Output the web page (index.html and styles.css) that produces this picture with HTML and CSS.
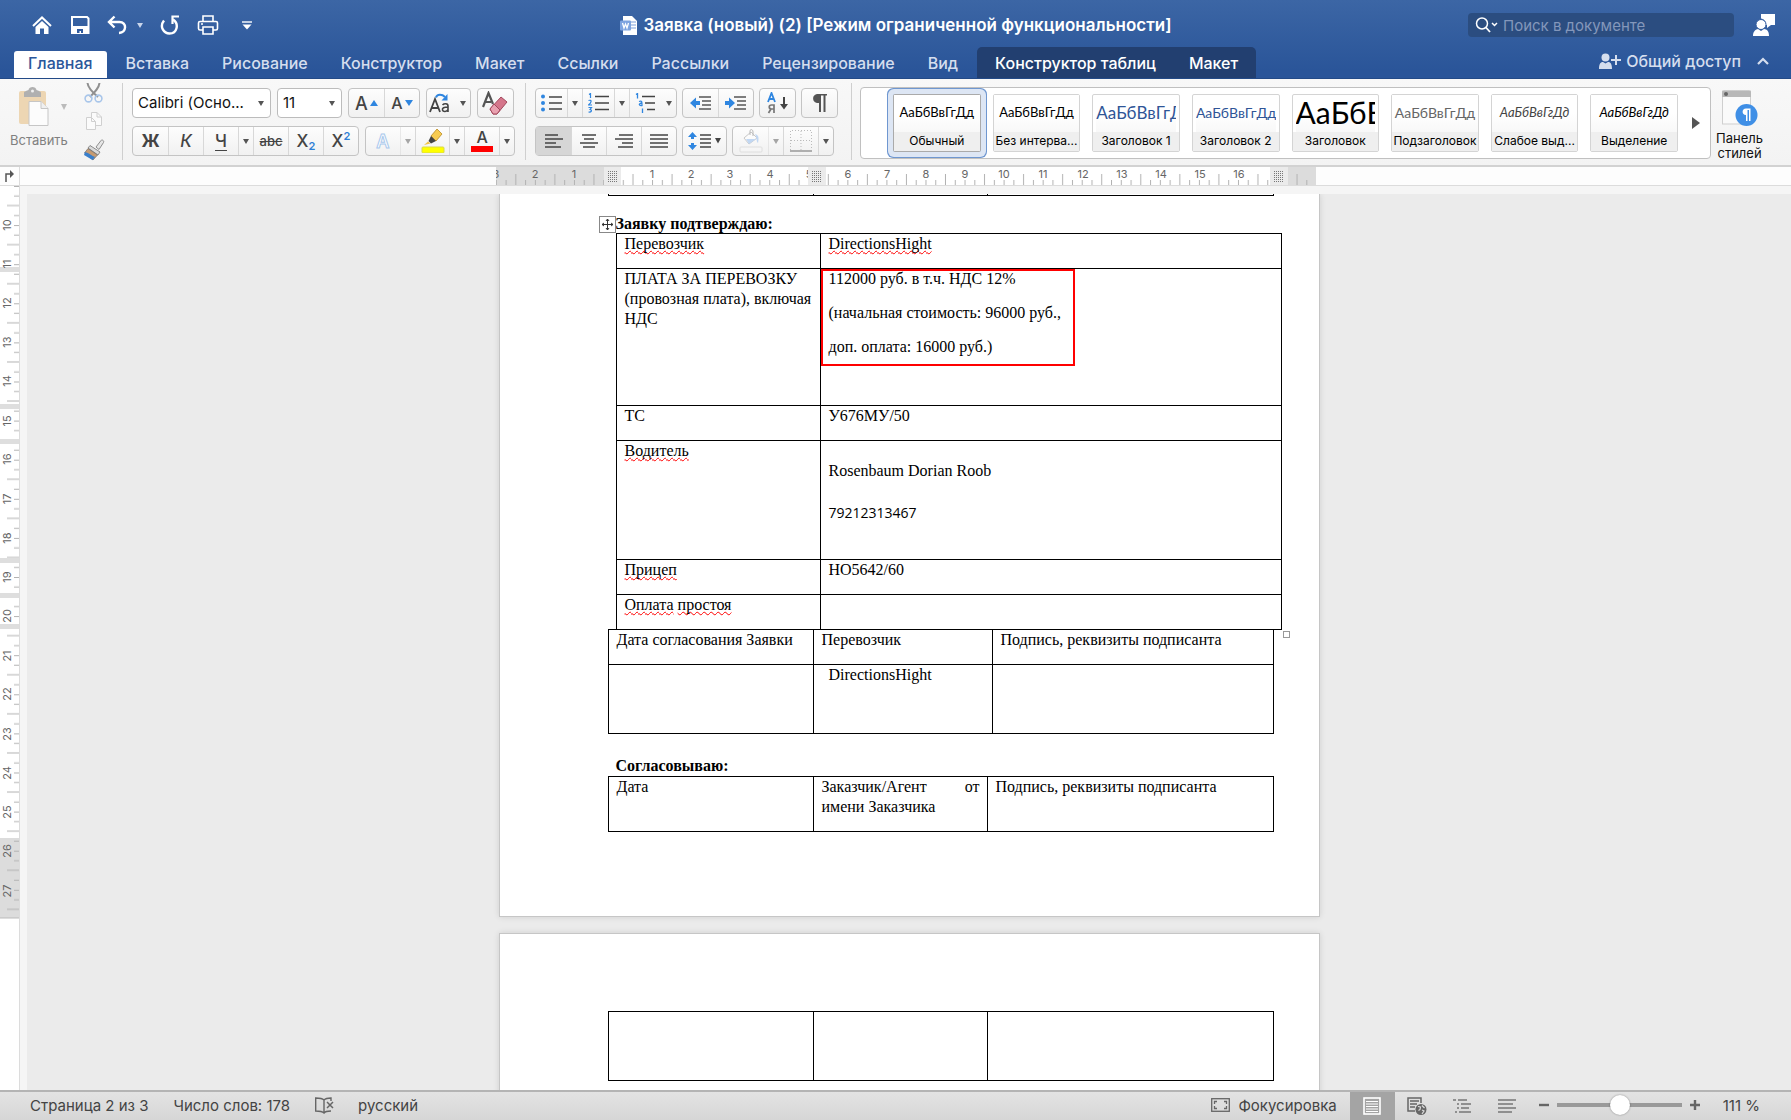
FILE: index.html
```html
<!DOCTYPE html>
<html lang="ru">
<head>
    <meta charset="UTF-8">
    <meta name="viewport" content="width=device-width, initial-scale=1.0">
    <title>Заявка (новый) (2)</title>
    <link rel="stylesheet" href="styles.css">
</head>
<body>
    <header class="top">
        <div class="titlebar">
            <div class="quick">
                <button aria-label="Домой"><svg width="22" height="20" viewBox="0 0 22 20"><path d="M2 11L11 2.500L20 11" fill="none" stroke="#fff" stroke-width="2"/><path d="M4.500 12L11 6L17.500 12V19H13V13.500H9V19H4.500Z" fill="#fff"/></svg></button>
                <button aria-label="Сохранить"><svg width="20" height="20" viewBox="0 0 20 20"><path d="M2 2H17L18.500 3.500V18H2Z" fill="none" stroke="#fff" stroke-width="2"/><path d="M2 11H18V18H2Z" fill="#fff"/><path d="M7 18V14H13V18H11V16H9.500V18Z" fill="#2f5a9e"/></svg></button>
                <button class="with-caret" aria-label="Отменить"><svg width="20" height="20" viewBox="0 0 20 20"><path d="M7.500 1.500L2 7L7.500 12.500M2.500 7H12.500C20 7 20 17.500 12 18" fill="none" stroke="#fff" stroke-width="2.400"/></svg><svg width="6" height="5" viewBox="0 0 6 5"><path d="M0 0H6L3 5Z" fill="#c9d5ea"/></svg></button>
                <button aria-label="Повторить"><svg width="20" height="20" viewBox="0 0 20 20"><path d="M4 5.500C-1 12 4 18.500 9.500 18.500C17 18.500 19.500 9 13 4.500" fill="none" stroke="#fff" stroke-width="2.400"/><path d="M19 1.500H12.500V9" fill="none" stroke="#fff" stroke-width="2.200"/></svg></button>
                <button aria-label="Печать"><svg width="22" height="20" viewBox="0 0 22 20"><g fill="none" stroke="#fff" stroke-width="1.600"><path d="M6 6.500V1H16V6.500"/><rect x="1.500" y="6.500" width="19" height="8.500" rx="1.500"/><path d="M6 12H16V19H6Z" fill="#315b9e"/></g><path d="M4 9H6" stroke="#fff" stroke-width="1.400"/></svg></button>
                <button class="customize" aria-label="Настроить панель"><svg width="10" height="9" viewBox="0 0 10 9"><path d="M0 1H10" stroke="#fff" stroke-width="1.400"/><path d="M.5 3.500H9.500L5 8.500Z" fill="#fff"/></svg></button>
            </div>
            <h1 class="doc-title">
                <svg width="17" height="19" viewBox="0 0 17 19"><path d="M3 0H12L17 5V19H3Z" fill="#fff"/><path d="M10 6H16M10 9H16M10 12H16" stroke="#7c9fda"/><rect x="0" y="4.500" width="11" height="10" rx="1" fill="#7ea4e0"/><path d="M2.500 7L4 12L5.500 8L7 12L8.500 7" fill="none" stroke="#fff" stroke-width="1.300"/></svg>
                Заявка (новый) (2) [Режим ограниченной функциональности]
            </h1>
            <div class="title-right">
                <label class="search">
                    <svg width="24" height="16" viewBox="0 0 24 16"><circle cx="7" cy="6.500" r="5.500" fill="none" stroke="#fff" stroke-width="1.500"/><path d="M11 10.500L15 15" stroke="#fff" stroke-width="1.800"/><path d="M17 6L19.500 8.500L22 6" fill="none" stroke="#fff" stroke-width="1.500"/></svg>
                    <input type="text" placeholder="Поиск в документе" aria-label="Поиск в документе">
                </label>
                <button aria-label="Отзыв"><svg width="22" height="24" viewBox="0 0 22 24"><path d="M8 1H22V12H18L14 15V12H13C13 8 11 6 8 5.500Z" fill="#fff"/><circle cx="8" cy="11.500" r="5" fill="#fff" stroke="#315b9e" stroke-width="1"/><path d="M0 23C0 18 3 16.500 5 16L8 18L11 16C14 16.500 16 18 16 23Z" fill="#fff"/></svg></button>
            </div>
        </div>
        <nav class="tabs">
            <a class="tab active" href="#home">Главная</a>
            <a class="tab" href="#insert">Вставка</a>
            <a class="tab" href="#draw">Рисование</a>
            <a class="tab" href="#design">Конструктор</a>
            <a class="tab" href="#layout">Макет</a>
            <a class="tab" href="#refs">Ссылки</a>
            <a class="tab" href="#mail">Рассылки</a>
            <a class="tab" href="#review">Рецензирование</a>
            <a class="tab" href="#view">Вид</a>
            <div class="context-tabs">
                <a class="tab" href="#table-design">Конструктор таблиц</a>
                <a class="tab" href="#table-layout">Макет</a>
            </div>
            <div class="tabs-right">
                <button class="share"><svg width="22" height="16" viewBox="0 0 22 16"><circle cx="6.500" cy="4.500" r="4" fill="#d5deee"/><path d="M0 16C0 10 2 9 4 9L6.500 10.500L9 9C11 9 13 10 13 16Z" fill="#d5deee"/><path d="M12 7H22M17 2V12" stroke="#d5deee" stroke-width="2"/></svg>Общий доступ</button>
                <button aria-label="Свернуть ленту"><svg width="12" height="8" viewBox="0 0 12 8"><path d="M1 7L6 2L11 7" fill="none" stroke="#d5deee" stroke-width="2.200"/></svg></button>
            </div>
        </nav>
    </header>

    <div class="ribbon">
        <section class="clipboard">
            <button class="paste">
                <span class="paste-icon">
                    <svg width="30" height="40" viewBox="0 0 30 40"><rect x="0" y="4" width="27" height="33" rx="2" fill="#edd6b3"/><path d="M5 10V6C5 4 8 4 9.500 3C10 -1 17 -1 17.500 3C19 4 22 4 22 6V10Z" fill="#b0b0b0"/><circle cx="13.500" cy="4" r="1.500" fill="#f0f0f0"/><path d="M10 14.500H22L29 21.500V38.500H10Z" fill="#fcfcfc" stroke="#c6c6c6"/><path d="M22 14.500V21.500H29" fill="#f0f0f0" stroke="#c6c6c6"/></svg>
                    <svg width="6" height="6" viewBox="0 0 6 6"><path d="M0 0H6L3 6Z" fill="#bbb"/></svg>
                </span>
                Вставить
            </button>
            <div class="clip-tools">
                <button aria-label="Вырезать"><svg width="20" height="20" viewBox="0 0 20 20"><path d="M3.500 0C4 5 8 9 14 14M15.500 0C15 5 11 9 6 14" fill="none" stroke="#909090" stroke-width="2"/><g fill="none" stroke="#a9c6ea" stroke-width="1.600"><circle cx="4.500" cy="15.500" r="3.400"/><circle cx="14.500" cy="15.500" r="3.400"/></g></svg></button>
                <button aria-label="Копировать"><svg width="20" height="20" viewBox="0 0 20 20"><g fill="#fbfbfb" stroke="#d0d0d0"><path d="M7.500 1.500H13L17.500 6V14.500H7.500Z"/><path d="M2.500 6.500H7.500L11.500 10.500V18.500H2.500Z"/><path d="M13 1.500V6H17.500M7.500 6.500V10.500H11.500" fill="none"/></g></svg></button>
                <button aria-label="Формат по образцу"><svg width="22" height="22" viewBox="0 0 22 22"><path d="M13 8L18 1.500C19 0 21.500 2 20.500 3.500L16 10.500Z" fill="#e6e6e6" stroke="#8e8e8e"/><path d="M7 6.500L17 13L15 16L5 9Z" fill="#dadada" stroke="#8b8b8b"/><path d="M5 9.500L14.500 16L10 21L1.500 14Z" fill="#c69b72" stroke="#6c6c6c" stroke-width=".7"/><path d="M2 13C6 14 9 17 12 18L9.500 21L1 16Z" fill="#3a7fcb"/></svg></button>
            </div>
        </section>

        <section class="font-tools">
            <div class="row">
                <label class="combo combo-font"><select aria-label="Шрифт"><option>Calibri (Осно...</option></select><svg class="arrow" width="6" height="7" viewBox="0 0 6 7"><path d="M0 1H6L3 6Z"/></svg></label>
                <label class="combo combo-size"><select aria-label="Размер"><option>11</option></select><svg class="arrow" width="6" height="7" viewBox="0 0 6 7"><path d="M0 1H6L3 6Z"/></svg></label>
                <div class="group">
                    <button class="glyph" aria-label="Увеличить шрифт"><b>A</b><svg width="8" height="6" viewBox="0 0 8 6"><path d="M0 6L4 0L8 6Z" fill="#2f86e0"/></svg></button>
                    <button class="glyph glyph-small" aria-label="Уменьшить шрифт"><b>A</b><svg width="8" height="6" viewBox="0 0 8 6"><path d="M0 0H8L4 6Z" fill="#2f86e0"/></svg></button>
                </div>
                <div class="group">
                    <button class="case" aria-label="Регистр"><svg width="24" height="20" viewBox="0 0 24 20"><path d="M1 19L6 6L11 19M3 15H9.500" fill="none" stroke="#444" stroke-width="1.800"/><path d="M13.500 12C15 10.500 19 10 19 13V19M19 14C15 14 13 15 13.500 17C14 19 18 19 19 16.500" fill="none" stroke="#444" stroke-width="1.600"/><path d="M7 4.500C8 1 13 1 16 4" fill="none" stroke="#2f86e0" stroke-width="2"/><path d="M12.500 7.500H18.500V1Z" fill="#2f86e0"/></svg></button>
                    <button class="drop" aria-label="Варианты регистра"><svg class="arrow" width="6" height="7" viewBox="0 0 6 7"><path d="M0 1H6L3 6Z"/></svg></button>
                </div>
                <div class="group">
                    <button aria-label="Очистить формат"><svg width="28" height="25" viewBox="0 0 28 25"><path d="M1 16L6.500 2L11 13M3 11H9" fill="none" stroke="#555" stroke-width="2.200"/><path d="M8 18L19 6L25 11L15 23H11Z" fill="#d5768b" stroke="#a2485c"/><path d="M8 18L12 13L18 19L15 23H11Z" fill="#e9a1b0" stroke="#a2485c"/></svg></button>
                </div>
            </div>
            <div class="row">
                <div class="group">
                    <button class="letter"><b>Ж</b></button>
                    <button class="letter"><i>К</i></button>
                    <button class="letter"><u>Ч</u></button>
                    <button class="drop" aria-label="Вид подчеркивания"><svg class="arrow" width="6" height="7" viewBox="0 0 6 7"><path d="M0 1H6L3 6Z"/></svg></button>
                    <button class="letter strike"><s>abc</s></button>
                    <button class="letter">X<sub>2</sub></button>
                    <button class="letter">X<sup>2</sup></button>
                </div>
                <div class="group grow">
                    <button class="effect">A</button>
                    <button class="drop faded" aria-label="Эффекты"><svg class="arrow" width="6" height="7" viewBox="0 0 6 7"><path d="M0 1H6L3 6Z"/></svg></button>
                    <button aria-label="Цвет выделения"><svg width="24" height="24" viewBox="0 0 24 24"><path d="M10 7L16 0L21 5L15 12Z" fill="#f7cb52" stroke="#b98b25" stroke-width=".8"/><path d="M10 7L15 12L10 14.500L7.500 12Z" fill="#444"/><path d="M7 12.500L9.500 14.500L3 16Z" fill="#efc34a"/><rect x="1" y="18" width="22" height="6" rx="1" fill="#ff0" stroke="#d9d94a"/></svg></button>
                    <button class="drop" aria-label="Цвета выделения"><svg class="arrow" width="6" height="7" viewBox="0 0 6 7"><path d="M0 1H6L3 6Z"/></svg></button>
                    <button class="color">A</button>
                    <button class="drop" aria-label="Цвета текста"><svg class="arrow" width="6" height="7" viewBox="0 0 6 7"><path d="M0 1H6L3 6Z"/></svg></button>
                </div>
            </div>
        </section>

        <section class="para-tools">
            <div class="row">
                <div class="group lists">
                    <button aria-label="Маркеры"><svg width="22" height="18" viewBox="0 0 22 18"><g fill="#2f86e0"><circle cx="2" cy="2.500" r="2"/><circle cx="2" cy="9" r="2"/><circle cx="2" cy="15.500" r="2"/></g><path d="M8 3H21M8 9H21M8 15H21" stroke="#444" stroke-width="1.500"/></svg></button>
                    <button class="drop" aria-label="Виды маркеров"><svg class="arrow" width="6" height="7" viewBox="0 0 6 7"><path d="M0 1H6L3 6Z"/></svg></button>
                    <button aria-label="Нумерация"><svg width="22" height="20" viewBox="0 0 22 20"><path d="M1 1.500L2.500 .5V5M.5 7.500C4 6.500 4 9 .5 12H4M.5 14.500H3.500L2 16.500C4.500 17 3.500 19.500 .5 19" fill="none" stroke="#2f86e0" stroke-width="1.200"/><path d="M7 3.500H21M7 10H21M7 16.500H21" stroke="#444" stroke-width="1.500"/></svg></button>
                    <button class="drop" aria-label="Виды нумерации"><svg class="arrow" width="6" height="7" viewBox="0 0 6 7"><path d="M0 1H6L3 6Z"/></svg></button>
                    <button aria-label="Многоуровневый список"><svg width="22" height="20" viewBox="0 0 22 20"><path d="M1 1.500L2.500 .5V5.500M4 8.500C7 7.500 7 8.500 7 12.500C4 13 3 10.500 7 10M7.500 15.500V20" fill="none" stroke="#2f86e0" stroke-width="1.300"/><path d="M7 3.500H20M10 10H20M12 16.500H20" stroke="#444" stroke-width="1.500"/></svg></button>
                    <button class="drop plain" aria-label="Уровни"><svg class="arrow" width="6" height="7" viewBox="0 0 6 7"><path d="M0 1H6L3 6Z"/></svg></button>
                </div>
                <div class="group">
                    <button aria-label="Уменьшить отступ"><svg width="22" height="16" viewBox="0 0 22 16"><path d="M0 8L6 2.500V6H10V10H6V13.500Z" fill="#2f86e0"/><path d="M9 2H21M12 6H21M12 10H21M9 14H21" stroke="#555" stroke-width="1.400"/></svg></button>
                    <button aria-label="Увеличить отступ"><svg width="22" height="16" viewBox="0 0 22 16"><path d="M10 8L4 2.500V6H0V10H4V13.500Z" fill="#2f86e0"/><path d="M9 2H21M12 6H21M12 10H21M9 14H21" stroke="#555" stroke-width="1.400"/></svg></button>
                </div>
                <div class="group">
                    <button aria-label="Сортировка"><svg width="22" height="22" viewBox="0 0 22 22"><path d="M1 10L4.500 1L8 10M2 7H7" fill="none" stroke="#2f86e0" stroke-width="1.800"/><path d="M7 21V13H4.500C1.500 13 1.500 17 4.500 17H7M4 17L1.500 21" fill="none" stroke="#777" stroke-width="1.700"/><path d="M17 5V14" stroke="#444" stroke-width="2"/><path d="M13 12H21L17 17.500Z" fill="#444"/></svg></button>
                </div>
                <div class="group">
                    <button aria-label="Непечатаемые знаки"><svg width="16" height="20" viewBox="0 0 16 20"><path d="M15 1H6C-.5 1 -.5 10 6 10H7V19H9V2.500H11.500V19H13.500V2.500H15Z" fill="#555"/></svg></button>
                </div>
            </div>
            <div class="row">
                <div class="group">
                    <button class="pressed" aria-label="По левому краю"><svg width="20" height="16" viewBox="0 0 20 16"><path d="M1 2H14M1 6H19M1 10H12M1 14H17" stroke="#444" stroke-width="1.500"/></svg></button>
                    <button aria-label="По центру"><svg width="20" height="16" viewBox="0 0 20 16"><path d="M3 2H17M5 6H15M1 10H19M4 14H16" stroke="#444" stroke-width="1.500"/></svg></button>
                    <button aria-label="По правому краю"><svg width="20" height="16" viewBox="0 0 20 16"><path d="M5 2H19M1 6H19M8 10H19M4 14H19" stroke="#444" stroke-width="1.500"/></svg></button>
                    <button aria-label="По ширине"><svg width="20" height="16" viewBox="0 0 20 16"><path d="M1 2H19M1 6H19M1 10H19M1 14H19" stroke="#444" stroke-width="1.500"/></svg></button>
                </div>
                <div class="group spacing">
                    <button aria-label="Интервал"><svg width="34" height="18" viewBox="0 0 34 18"><path d="M4.500 0L9 5H6V7H3V5H0ZM4.500 18L9 13H6V11H3V13H0Z" fill="#2f86e0"/><path d="M12 3H23M12 7H23M12 11H23M12 15H23" stroke="#444" stroke-width="1.400"/><path d="M27 6H33L30 11.500Z" fill="#444"/></svg></button>
                </div>
                <div class="group fills">
                    <button class="faded" aria-label="Заливка"><svg width="24" height="24" viewBox="0 0 24 24"><path d="M5 9L12 3L18 9L10 15Z" fill="#fff" stroke="#999"/><path d="M11 6V2C11 0 14 0 14 3V7" fill="none" stroke="#777"/><path d="M7 10H17L10 15Z" fill="#8cb8ef"/><path d="M16 5C20 6 20 9 19 14C17 12 18 8 16 5Z" fill="#8cb8ef"/><rect x="1" y="18" width="22" height="5" rx="1" fill="#f8f8f8" stroke="#ccc"/></svg></button>
                    <button class="drop faded" aria-label="Цвета заливки"><svg class="arrow" width="6" height="7" viewBox="0 0 6 7"><path d="M0 1H6L3 6Z"/></svg></button>
                    <button aria-label="Границы"><svg width="22" height="22" viewBox="0 0 22 22"><path d="M.5 20V.5H21.500V20M11 1V20M1 10.500H21" fill="none" stroke="#bbb" stroke-dasharray="1 2"/><path d="M0 21H22" stroke="#999" stroke-width="1.500"/></svg></button>
                    <button class="drop" aria-label="Виды границ"><svg class="arrow" width="6" height="7" viewBox="0 0 6 7"><path d="M0 1H6L3 6Z"/></svg></button>
                </div>
            </div>
        </section>

        <section class="styles-tools">
            <div class="gallery">
                <button class="style selected"><span class="preview">АаБбВвГгДд</span><span class="name">Обычный</span></button>
                <button class="style"><span class="preview">АаБбВвГгДд</span><span class="name">Без интерва...</span></button>
                <button class="style"><span class="preview h1">АаБбВвГгДд</span><span class="name">Заголовок 1</span></button>
                <button class="style"><span class="preview h2">АаБбВвГгДд</span><span class="name">Заголовок 2</span></button>
                <button class="style"><span class="preview title">АаБбВ</span><span class="name">Заголовок</span></button>
                <button class="style"><span class="preview subtitle">АаБбВвГгДд</span><span class="name">Подзаголовок</span></button>
                <button class="style"><span class="preview subtle">АаБбВвГгДд</span><span class="name">Слабое выд...</span></button>
                <button class="style"><span class="preview emphasis">АаБбВвГгДд</span><span class="name">Выделение</span></button>
                <button class="more" aria-label="Другие стили"><svg width="8" height="12" viewBox="0 0 8 12"><path d="M0 0L8 6L0 12Z" fill="#555"/></svg></button>
            </div>
            <button class="styles-pane">
                <svg width="36" height="37" viewBox="0 0 36 37"><rect x=".5" y="1" width="28" height="33" fill="#fafafa" stroke="#cfcfcf"/><path d="M0 7V2Q0 .5 2 .5H27Q29 .5 29 2V7Z" fill="#b8b8b8"/><circle cx="4" cy="4" r="2" fill="#666"/><circle cx="24.500" cy="25" r="11" fill="#3f8fe6"/><path d="M28.500 18.500H24C19.500 18.500 19.500 25 24 25V31H25.500V20H27V31H28.500Z" fill="#fff"/></svg>
                <span>Панель<br>стилей</span>
            </button>
        </section>
    </div>

    <div class="ruler-row">
        <div class="corner"><svg width="9" height="12" viewBox="0 0 9 12"><path d="M1 12V4H6" fill="none" stroke="#555" stroke-width="1.500"/><path d="M5 0L9 4L5 8Z" fill="#555"/></svg></div>
        <div class="hruler">
            <svg width="820" height="18" viewBox="0 0 820 18">
                <defs>
                    <pattern id="cm" x="117" y="0" width="39.060" height="18" patternUnits="userSpaceOnUse"><path d="M.5 13V18M10.300 13V18M20 7V18M29.800 13V18" stroke="#b2b2b2"/></pattern>
                    <pattern id="dots" width="2" height="2" patternUnits="userSpaceOnUse"><rect width="1" height="1" fill="#777"/></pattern>
                </defs>
                <rect width="820" height="18" fill="#fff"/>
                <rect width="108" height="18" fill="#dcdcdc"/>
                <rect x="792" width="28" height="18" fill="#dcdcdc"/>
                <rect width="820" height="18" fill="url(#cm)"/>
                <g class="ruler-text" text-anchor="middle">
                    <text x="0" y="11">3</text><text x="39" y="11">2</text><text x="78" y="11">1</text>
                    <text x="156" y="11">1</text><text x="195" y="11">2</text><text x="234" y="11">3</text><text x="274" y="11">4</text><text x="313" y="11">5</text><text x="352" y="11">6</text><text x="391" y="11">7</text><text x="430" y="11">8</text><text x="469" y="11">9</text><text x="508" y="11">10</text><text x="547" y="11">11</text><text x="587" y="11">12</text><text x="626" y="11">13</text><text x="665" y="11">14</text><text x="704" y="11">15</text><text x="743" y="11">16</text>
                </g>
                <g fill="#ebebeb"><rect x="108" width="17" height="18"/><rect x="312" width="18" height="18"/><rect x="774" width="18" height="18"/></g>
                <g fill="url(#dots)"><rect x="112" y="4" width="9" height="12"/><rect x="316" y="4" width="9" height="12"/><rect x="778" y="4" width="9" height="12"/></g>
            </svg>
        </div>
    </div>

    <main class="workspace">
        <div class="vruler">
            <svg width="19" height="904" viewBox="0 0 19 904">
                <defs><pattern id="vcm" x="0" y="0" width="19" height="39.100" patternUnits="userSpaceOnUse"><path d="M14 .5H19M14 10H19M7 19.500H19M14 29.500H19" stroke="#b2b2b2"/></pattern></defs>
                <rect y="652" width="19" height="80" fill="#dcdcdc"/>
                <rect y="0" width="19" height="732" fill="url(#vcm)"/>
                <g fill="#dedede"><rect y="81" width="19" height="5"/><rect y="218" width="19" height="5"/><rect y="253" width="19" height="5"/><rect y="372" width="19" height="5"/><rect y="407" width="19" height="5"/><rect y="438" width="19" height="5"/></g>
                <path d="M0 732H19" stroke="#bbb"/>
                <g class="ruler-text" text-anchor="middle">
                    <text transform="translate(11 39) rotate(-90)">10</text><text transform="translate(11 78) rotate(-90)">11</text><text transform="translate(11 117) rotate(-90)">12</text><text transform="translate(11 156) rotate(-90)">13</text><text transform="translate(11 195) rotate(-90)">14</text><text transform="translate(11 235) rotate(-90)">15</text><text transform="translate(11 273) rotate(-90)">16</text><text transform="translate(11 313) rotate(-90)">17</text><text transform="translate(11 352) rotate(-90)">18</text><text transform="translate(11 391) rotate(-90)">19</text><text transform="translate(11 430) rotate(-90)">20</text><text transform="translate(11 470) rotate(-90)">21</text><text transform="translate(11 508) rotate(-90)">22</text><text transform="translate(11 548) rotate(-90)">23</text><text transform="translate(11 587) rotate(-90)">24</text><text transform="translate(11 626) rotate(-90)">25</text><text transform="translate(11 665) rotate(-90)">26</text><text transform="translate(11 705) rotate(-90)">27</text>
                </g>
            </svg>
        </div>
        <div class="canvas">
            <article class="page page-first">
                <table class="sheet tail"><tr><td class="c1"></td><td class="c2-narrow"></td><td></td></tr></table>
                <div class="confirm">
                    <span class="move-handle"><svg width="13" height="13" viewBox="0 0 13 13"><path d="M6.500 1V12M1 6.500H12M5 3L6.500 1L8 3M5 10L6.500 12L8 10M3 5L1 6.500L3 8M10 5L12 6.500L10 8" fill="none" stroke="#333"/></svg></span>
                    <h2>Заявку подтверждаю:</h2>
                    <table class="sheet main-table">
                        <tr><td class="m1"><p><span class="typo">Перевозчик</span></p></td><td><p><span class="typo">DirectionsHight</span></p></td></tr>
                        <tr>
                            <td><p>ПЛАТА ЗА ПЕРЕВОЗКУ<br>(провозная плата), включая<br>НДС</p></td>
                            <td class="price"><span class="mark"></span><p>112000 руб. в т.ч. НДС 12%</p><p>(начальная стоимость: 96000 руб.,</p><p>доп. оплата: 16000 руб.)</p><p>&nbsp;</p></td>
                        </tr>
                        <tr><td><p>ТС</p></td><td><p>У676МУ/50</p></td></tr>
                        <tr class="driver"><td><p><span class="typo">Водитель</span></p></td><td class="driver-info"><p>Rosenbaum Dorian Roob</p><p class="phone">79212313467</p></td></tr>
                        <tr><td><p><span class="typo">Прицеп</span></p></td><td><p>НО5642/60</p></td></tr>
                        <tr><td><p><span class="typo">Оплата</span> <span class="typo">простоя</span></p></td><td></td></tr>
                    </table>
                    <span class="size-handle"></span>
                </div>
                <table class="sheet sign-table">
                    <tr><td class="c1"><p>Дата согласования Заявки</p></td><td class="c2"><p>Перевозчик</p></td><td><p>Подпись, реквизиты подписанта</p></td></tr>
                    <tr class="tall"><td></td><td><p class="indent">DirectionsHight</p></td><td></td></tr>
                </table>
                <h2 class="agree">Согласовываю:</h2>
                <table class="sheet">
                    <tr><td class="c1"><p>Дата</p></td><td class="c2-narrow"><p class="justify">Заказчик/Агент от имени Заказчика</p></td><td><p>Подпись, реквизиты подписанта</p></td></tr>
                </table>
            </article>
            <article class="page page-next">
                <table class="sheet"><tr class="tall"><td class="c1"></td><td class="c2-narrow"></td><td></td></tr></table>
            </article>
        </div>
    </main>

    <footer class="status">
        <span>Страница 2 из 3</span>
        <span class="words">Число слов: 178</span>
        <button aria-label="Правописание"><svg width="20" height="17" viewBox="0 0 20 17"><path d="M9 3C7 1 3 1 .7 1V14C4 14 7 14 9 16C10 14.500 12 14 16 14M9 3V16M9 3C11 1 14 1 16 1V4" fill="none" stroke="#666" stroke-width="1.400"/><path d="M12 5L18 11M18 5L12 11" stroke="#666" stroke-width="1.500"/></svg></button>
        <span class="lang">русский</span>
        <button class="focus"><svg width="19" height="14" viewBox="0 0 19 14"><rect x=".7" y=".7" width="17.600" height="12.600" fill="none" stroke="#666" stroke-width="1.300"/><path d="M3.500 6V3.500H6M13 3.500H15.500V6M15.500 8V10.500H13M6 10.500H3.500V8" fill="none" stroke="#666" stroke-width="1.300"/></svg>Фокусировка</button>
        <div class="views">
            <button class="current" aria-label="Разметка страницы"><svg width="18" height="18" viewBox="0 0 18 18"><rect x="1" y="1" width="16" height="16" fill="#a4a4a4" stroke="#fff" stroke-width="1.600"/><path d="M3 4.500H15M3 7H15M3 9.500H15M3 12H15M3 14.500H15" stroke="#fff"/></svg></button>
            <button aria-label="Веб-документ"><svg width="20" height="19" viewBox="0 0 20 19"><path d="M8 14H1V1H14V6M3 4H12M3 7H10M3 10H8" fill="none" stroke="#666" stroke-width="1.500"/><circle cx="14" cy="12.500" r="5.500" fill="#666"/><path d="M11 9.500L13.500 10L13 12.500L11.500 13.500M15 8.500L17.500 11M15 13L17 14L15 17" fill="none" stroke="#ddd" stroke-width="1.200"/></svg></button>
            <button aria-label="Структура"><svg width="20" height="16" viewBox="0 0 20 16"><path d="M1 2H4M6 2H15M5 6H7M9 6H19M5 10H7M9 10H17M3 14H5M7 14H19" stroke="#777" stroke-width="1.500"/></svg></button>
            <button aria-label="Черновик"><svg width="18" height="16" viewBox="0 0 18 16"><path d="M0 2H18M0 6H15M0 10H18M0 14H14" stroke="#777" stroke-width="1.600"/></svg></button>
        </div>
        <div class="zoom">
            <button aria-label="Уменьшить"><svg width="10" height="10" viewBox="0 0 10 10"><path d="M0 5H10" stroke="#666" stroke-width="2.400"/></svg></button>
            <input type="range" min="0" max="100" value="51" aria-label="Масштаб">
            <button aria-label="Увеличить"><svg width="10" height="10" viewBox="0 0 10 10"><path d="M0 5H10M5 0V10" stroke="#666" stroke-width="2.400"/></svg></button>
        </div>
        <span class="percent">111 %</span>
    </footer>
</body>
</html>
```

FILE: styles.css
```css
* {
    box-sizing: border-box;
}

body {
    margin: 0;
    height: 100vh;
    display: flex;
    flex-direction: column;
    overflow: hidden;
    font-family: Inter, "Liberation Sans", sans-serif;
    font-size: 15px;
    color: #222;
    background-color: #ebebeb;
}

button {
    font: inherit;
    color: inherit;
    background: none;
    border: none;
    padding: 0;
    display: flex;
    align-items: center;
    justify-content: center;
}

svg {
    flex: none;
    display: block;
}

h1, h2, p {
    margin: 0;
}

/* title bar and tabs */
.top {
    flex: none;
    background: linear-gradient(#3c66a5, #2a5599 90%);
    border-bottom: 1px solid #234a87;
}

.titlebar {
    height: 47px;
    display: grid;
    grid-template-columns: 1fr auto 1fr;
    align-items: center;
    padding: 3px 16px 0;
}

.quick {
    display: flex;
    align-items: center;
    gap: 17px;
    padding-left: 15px;
}

.quick .with-caret {
    gap: 10px;
}

.quick .customize {
    margin-left: 6px;
}

.doc-title {
    display: flex;
    align-items: center;
    gap: 7px;
    font-size: 17px;
    font-weight: 600;
    color: #fff;
}

.title-right {
    display: flex;
    justify-content: flex-end;
    align-items: center;
    gap: 19px;
}

.search {
    display: flex;
    align-items: center;
    gap: 4px;
    width: 266px;
    height: 24px;
    padding: 0 7px;
    border-radius: 4px;
    background-color: #2b4d80;
}

.search input {
    flex: 1;
    min-width: 0;
    padding: 0;
    border: none;
    outline: none;
    background: none;
    color: #fff;
    font: inherit;
}

.search input::placeholder {
    color: #8397bb;
}

.tabs {
    height: 31px;
    display: flex;
    align-items: flex-end;
    gap: 5px;
    padding-left: 14px;
}

.tab {
    height: 27px;
    padding: 0 14px;
    line-height: 24px;
    font-size: 16px;
    font-weight: 500;
    color: #d5deee;
    text-decoration: none;
    white-space: nowrap;
    border-radius: 3px 3px 0 0;
}

.tab.active {
    background-color: #fff;
    color: #2b579a;
}

.context-tabs {
    display: flex;
    align-items: flex-end;
    gap: 5px;
    height: 31px;
    padding: 0 4px;
    background-color: #223f70;
    border-radius: 5px 5px 0 0;
}

.context-tabs .tab {
    color: #fff;
}

.tabs-right {
    flex: 1;
    display: flex;
    justify-content: flex-end;
    align-items: center;
    height: 31px;
    gap: 16px;
    padding: 0 22px 3px 0;
}

.share {
    gap: 5px;
    font-size: 16px;
    font-weight: 500;
    color: #d5deee;
}

/* ribbon */
.ribbon {
    flex: none;
    height: 88px;
    display: flex;
    background: linear-gradient(#f8f8f8, #f3f3f3);
    border-bottom: 2px solid #d2d2d2;
}

.ribbon section {
    display: flex;
    position: relative;
    padding: 9px 10px 0;
}

.ribbon section + section::before {
    content: "";
    width: 1px;
    height: 77px;
    position: absolute;
    left: 0;
    top: 4px;
    background-color: #cfcfcf;
}

.ribbon .clipboard {
    width: 122px;
    gap: 15px;
    padding-top: 4px;
}

.paste {
    flex-direction: column;
    justify-content: flex-start;
    gap: 5px;
    padding-top: 4px;
    font-size: 13px;
    color: #808080;
}

.paste-icon {
    display: flex;
    align-items: center;
    gap: 12px;
    padding-left: 8px;
}

.clip-tools {
    display: flex;
    flex-direction: column;
    align-items: center;
    gap: 8px;
}

.ribbon .font-tools {
    width: 403px;
    flex-direction: column;
    gap: 8px;
}

.ribbon .para-tools {
    width: 326px;
    flex-direction: column;
    gap: 8px;
}

.row {
    display: flex;
    gap: 6px;
    height: 30px;
}

.para-tools .row {
    gap: 5px;
}

.group {
    display: flex;
    border: 1px solid #c4c4c4;
    border-radius: 4px;
    background: linear-gradient(#fdfdfd, #f1f1f1);
    color: #444;
}

.group.grow {
    flex: 1;
}

.group button {
    width: 35px;
    border-left: 1px solid #d8d8d8;
}

.group button:first-child {
    border-left: none;
}

.group.grow button,
.group.lists button {
    width: auto;
    flex: 1;
}

.lists {
    width: 142px;
}

.group.spacing button {
    width: 43px;
}

.group .drop,
.group.grow .drop,
.group.lists .drop {
    width: 15px;
    flex: none;
}

.group .drop.plain {
    border-left: none;
}

.group .case {
    width: 28px;
}

.group .case + .drop {
    border-left: none;
}

.faded {
    opacity: 0.5;
}

.pressed {
    background-color: #d6d6d6;
}

.arrow path {
    fill: #555;
}

.combo {
    display: grid;
    align-items: center;
    border: 1px solid #bcbcbc;
    border-radius: 4px;
    background-color: #fff;
}

.combo select,
.combo .arrow {
    grid-area: 1 / 1;
}

.combo select {
    appearance: none;
    width: 100%;
    height: 28px;
    padding: 0 18px 2px 5px;
    border: none;
    background: none;
    color: #111;
    font: inherit;
}

.combo .arrow {
    justify-self: end;
    margin-right: 6px;
    pointer-events: none;
}

.combo-font {
    width: 139px;
}

.combo-size {
    width: 65px;
}

.glyph {
    gap: 2px;
    font-size: 18px;
}

.glyph b {
    font-weight: 500;
}

.glyph-small {
    font-size: 16px;
}

.letter {
    font-size: 17px;
    font-weight: 500;
}

.letter sub,
.letter sup {
    font-size: 11px;
    font-weight: 600;
    color: #2f7fd6;
}

.letter sub {
    padding-top: 10px;
}

.letter sup {
    padding-bottom: 10px;
}

.letter u {
    text-underline-offset: 3px;
}

.letter.strike {
    font-size: 13px;
}

.effect {
    font-size: 18px;
    font-weight: 600;
    color: #fff;
    -webkit-text-stroke: 1px #a9c8ec;
}

.group .color {
    font-size: 16px;
    font-weight: 500;
    line-height: 16px;
    align-items: flex-start;
    padding-top: 2px;
    background: linear-gradient(#f00, #f00) center 19px / 22px 6px no-repeat;
}

/* style gallery */
.ribbon .styles-tools {
    flex: 1;
    min-width: 0;
    padding: 8px 28px 0 9px;
    gap: 5px;
}

.gallery {
    flex: 1;
    min-width: 0;
    height: 72px;
    display: flex;
    gap: 12px;
    padding: 6px 8px 6px 32px;
    background-color: #fff;
    border: 1px solid #c0c0c0;
    border-radius: 4px;
}

.style {
    flex: 1;
    min-width: 0;
    flex-direction: column;
    align-items: stretch;
    border: 1px solid #d4d4d4;
    border-radius: 2px;
    color: #000;
}

.style.selected {
    border-color: #aaa;
    box-shadow: 0 0 0 5px #dde6f4, 0 0 0 6px #6f97d0;
}

.preview {
    height: 37px;
    line-height: 35px;
    text-align: center;
    white-space: nowrap;
    font-family: Lato, "Open Sans", sans-serif;
    font-size: 13px;
    background: linear-gradient(#fff 50%, #f8f8f8);
}

.preview.h1,
.preview.h2,
.preview.title {
    text-align: left;
    margin: 0 3px;
    overflow: hidden;
}

.preview.h1 {
    font-size: 17px;
    color: #2f5597;
}

.preview.h2 {
    font-size: 14px;
    color: #2f5597;
}

.preview.title {
    font-size: 30px;
}

.preview.subtitle {
    font-size: 14px;
    color: #666;
}

.preview.subtle {
    color: #444;
    font-style: italic;
}

.preview.emphasis {
    font-style: italic;
}

.name {
    height: 19px;
    line-height: 17px;
    font-size: 12px;
    text-align: center;
    white-space: nowrap;
    background-color: #efefef;
}

.more {
    width: 12px;
}

.styles-pane {
    flex: none;
    flex-direction: column;
    justify-content: flex-start;
    padding-top: 3px;
    gap: 4px;
    font-size: 13px;
    line-height: 15px;
    color: #111;
}

/* rulers */
.ruler-row {
    flex: none;
    display: flex;
    height: 19px;
    background-color: #fdfdfd;
    border-bottom: 1px solid #dcdcdc;
}

.corner {
    width: 20px;
    display: flex;
    align-items: center;
    justify-content: center;
    border-right: 1px solid #dcdcdc;
}

.hruler {
    flex: 1;
    display: flex;
    justify-content: center;
}

.ruler-text {
    font-size: 11px;
    fill: #666;
}

.workspace {
    flex: 1;
    min-height: 0;
    display: flex;
}

.vruler {
    width: 20px;
    overflow: hidden;
    background-color: #fff;
    border-right: 1px solid #dcdcdc;
}

.canvas {
    flex: 1;
    overflow: hidden;
    border-top: 8px solid #f5f5f5;
    border-left: 7px solid #f5f5f5;
}

/* document */
.page {
    width: 821px;
    margin: 0 auto 16px;
    padding: 0 45px 0 108px;
    background-color: #fff;
    border: 1px solid #c6c6c6;
    box-shadow: 0 0 6px rgba(0, 0, 0, 0.12);
    font-family: "Liberation Serif", serif;
    font-size: 16px;
    line-height: 20px;
    color: #000;
}

.page-first {
    height: 723px;
    border-top: none;
}

.page-next {
    height: 400px;
    padding-top: 77px;
}

.page h2 {
    font-size: 16px;
    line-height: 19px;
    padding-left: 8px;
}

.sheet {
    width: 100%;
    table-layout: fixed;
    border-collapse: collapse;
}

.sheet td {
    border: 1px solid #000;
    padding: 0 7px 0 8px;
    vertical-align: top;
}

.sheet p {
    margin-bottom: 14px;
}

.sheet .c1 {
    width: 205px;
}

.sheet .c2 {
    width: 179px;
}

.sheet .c2-narrow {
    width: 174px;
}

.sheet.tail {
    height: 2px;
}

.sheet.tail td {
    border-top: none;
}

.confirm {
    position: relative;
    padding-top: 18px;
}

.main-table {
    position: relative;
    left: 8px;
}

.main-table .m1 {
    width: 204px;
}

.main-table td:first-child {
    padding-right: 0;
    white-space: nowrap;
}

.sign-table {
    margin-top: -1px;
}

.typo {
    text-decoration: underline wavy #f00 1px;
    text-decoration-skip-ink: none;
    text-underline-offset: 1px;
}

.price {
    position: relative;
}

.mark {
    position: absolute;
    left: 0;
    top: 0;
    width: 254px;
    height: 97px;
    border: 2px solid #f00;
}

.driver td {
    height: 119px;
}

.sheet .driver-info {
    padding-top: 20px;
}

.driver-info p {
    margin-bottom: 22px;
}

.phone {
    font-family: "Open Sans", sans-serif;
    font-size: 14px;
}

.move-handle {
    position: absolute;
    left: -9px;
    top: 20px;
    padding: 1px;
    border: 1px solid #888;
}

.size-handle {
    position: absolute;
    right: -16px;
    bottom: -8px;
    width: 7px;
    height: 7px;
    border: 1px solid #999;
}

.tall td {
    height: 69px;
}

.indent {
    padding-left: 7px;
}

.justify {
    text-align: justify;
}

.page .agree {
    padding: 22px 0 1px 8px;
}

/* status bar */
.status {
    flex: none;
    height: 30px;
    display: flex;
    align-items: center;
    padding: 0 31px 2px 30px;
    background: linear-gradient(#e3e3e3, #d6d6d6);
    border-top: 2px solid #b4b4b4;
    color: #444;
}

.words {
    margin: 0 25px;
}

.lang {
    margin-left: 23px;
}

.focus {
    margin-left: auto;
    gap: 8px;
}

.views {
    display: flex;
    align-self: stretch;
    margin: 0 0 -2px 13px;
}

.views button {
    width: 45px;
}

.views .current {
    background-color: #a4a4a4;
}

.zoom {
    display: flex;
    align-items: center;
    gap: 8px;
    margin-left: 9px;
}

.zoom input {
    appearance: none;
    width: 125px;
    height: 20px;
    margin: 0;
    background: linear-gradient(#999, #999) center / 100% 4px no-repeat;
}

.zoom input::-webkit-slider-thumb {
    appearance: none;
    width: 20px;
    height: 20px;
    border-radius: 50%;
    background-color: #fff;
    box-shadow: 0 0 2px rgba(0, 0, 0, 0.4);
}

.percent {
    margin-left: 23px;
}
```
